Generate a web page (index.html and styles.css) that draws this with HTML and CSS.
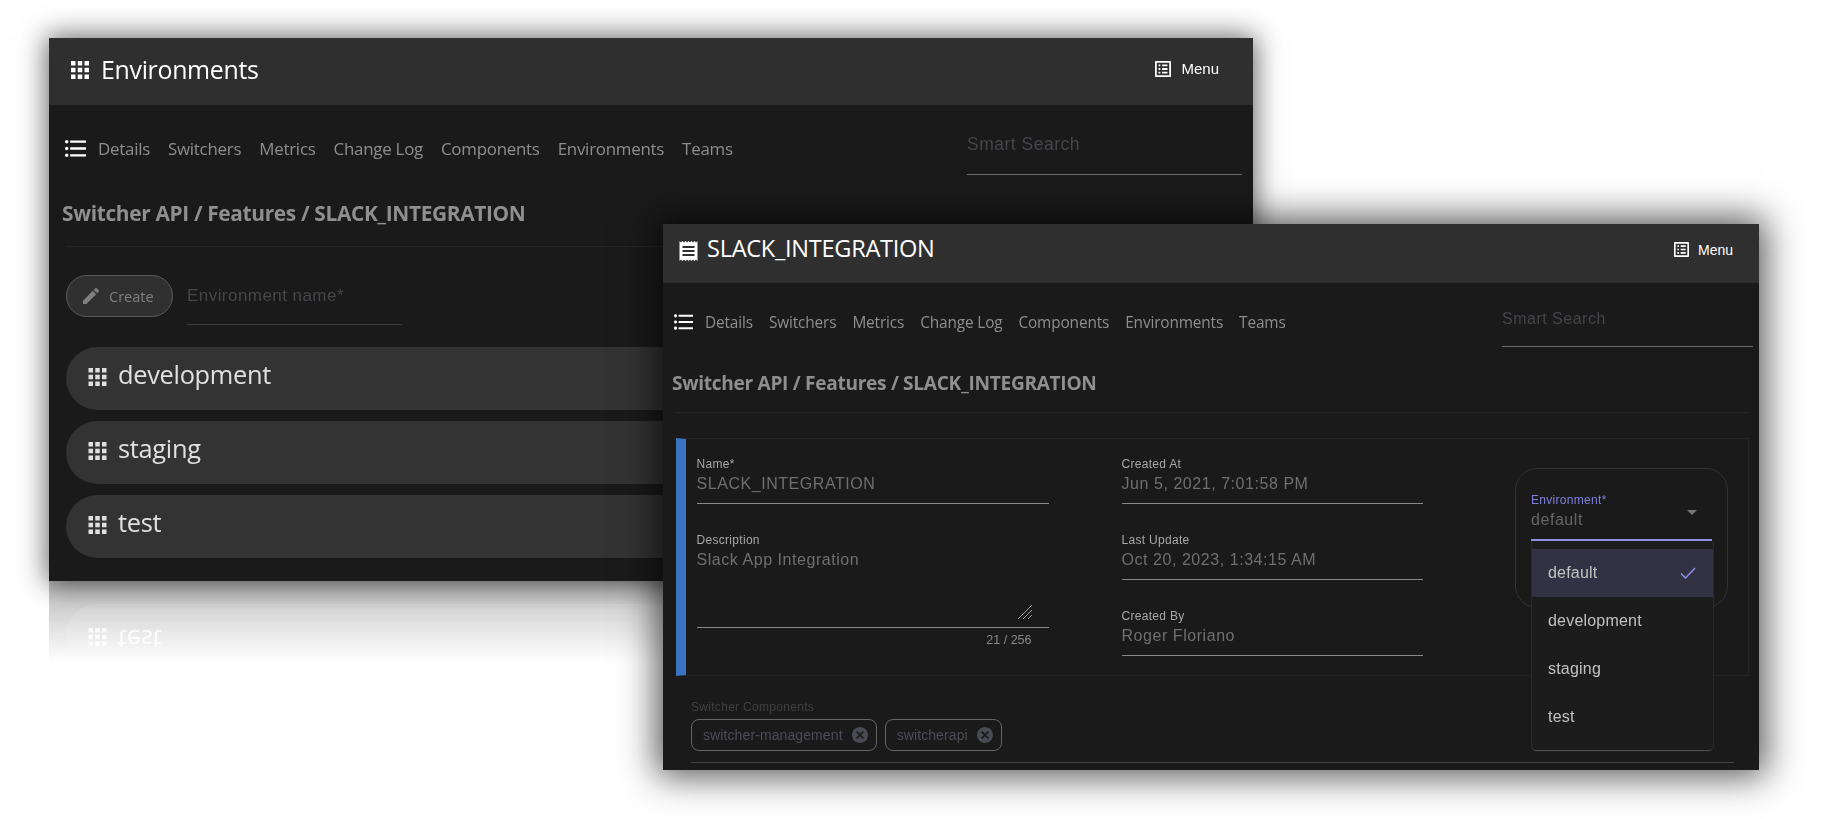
FILE: index.html
```html
<!DOCTYPE html>
<html lang="en">
<head>
  <meta charset="UTF-8">
  <title>Switcher API</title>
  <link rel="stylesheet" href="styles.css">
</head>
<body>
  <svg class="defs" width="0" height="0">
    <symbol id="i-apps" viewBox="4 4 16 16"><path d="M4 8h4V4H4v4zm6 12h4v-4h-4v4zm-6 0h4v-4H4v4zm0-6h4v-4H4v4zm6 0h4v-4h-4v4zm6-10v4h4V4h-4zm-6 4h4V4h-4v4zm6 6h4v-4h-4v4zm0 6h4v-4h-4v4z"/></symbol>
    <symbol id="i-list" viewBox="2.5 4.5 18.5 15"><path d="M4 10.5c-.83 0-1.5.67-1.5 1.5s.67 1.5 1.5 1.5 1.5-.67 1.5-1.5-.67-1.5-1.5-1.5zm0-6c-.83 0-1.5.67-1.5 1.5S3.17 7.5 4 7.5 5.5 6.83 5.5 6 4.83 4.5 4 4.5zm0 12c-.83 0-1.5.68-1.5 1.5s.68 1.5 1.5 1.5 1.5-.68 1.5-1.5-.67-1.5-1.5-1.5zM7 19h14v-2H7v2zm0-6h14v-2H7v2zm0-8v2h14V5H7z"/></symbol>
    <symbol id="i-menu" viewBox="3 3 18 18"><path d="M19 5v14H5V5h14m1.1-2H3.9c-.5 0-.9.4-.9.9v16.2c0 .4.4.9.9.9h16.2c.4 0 .9-.5.9-.9V3.9c0-.5-.5-.9-.9-.9zM11 7h6v2h-6V7zm0 4h6v2h-6v-2zm0 4h6v2h-6zM7 7h2v2H7zm0 4h2v2H7zm0 4h2v2H7z"/></symbol>
    <symbol id="i-receipt" viewBox="3 2 18 20"><path d="M18 17H6v-2h12v2zm0-4H6v-2h12v2zm0-4H6V7h12v2zM3 22l1.5-1.5L6 22l1.5-1.5L9 22l1.5-1.5L12 22l1.5-1.5L15 22l1.5-1.5L18 22l1.5-1.5L21 22V2l-1.5 1.5L18 2l-1.5 1.5L15 2l-1.5 1.5L12 2l-1.5 1.5L9 2 7.5 3.5 6 2 4.5 3.5 3 2v20z"/></symbol>
    <symbol id="i-edit" viewBox="3 3 18 18"><path d="M3 17.25V21h3.75L17.81 9.94l-3.75-3.75L3 17.25zM20.71 7.04c.39-.39.39-1.02 0-1.41l-2.34-2.34c-.39-.39-1.02-.39-1.41 0l-1.83 1.83 3.75 3.75 1.83-1.83z"/></symbol>
    <symbol id="i-cancel" viewBox="2 2 20 20"><path d="M12 2C6.47 2 2 6.47 2 12s4.47 10 10 10 10-4.47 10-10S17.53 2 12 2zm5 13.59L15.59 17 12 13.41 8.41 17 7 15.59 10.59 12 7 8.41 8.41 7 12 10.59 15.59 7 17 8.41 13.41 12 17 15.59z"/></symbol>
  </svg>

  <!-- back window: environments list -->
  <section class="window win-env">
    <header class="topbar">
      <div class="topbar-title">
        <svg class="ic-apps"><use href="#i-apps"/></svg>
        <span>Environments</span>
      </div>
      <div class="topbar-menu">
        <svg class="ic-menu"><use href="#i-menu"/></svg>
        <span>Menu</span>
      </div>
    </header>
    <div class="subnav">
      <svg class="ic-list"><use href="#i-list"/></svg>
      <a>Details</a><a>Switchers</a><a>Metrics</a><a>Change Log</a><a>Components</a><a>Environments</a><a>Teams</a>
      <div class="smart-search">Smart Search</div>
    </div>
    <h2 class="crumb">Switcher API / Features / SLACK_INTEGRATION</h2>
    <div class="crumb-line"></div>
    <div class="create-row">
      <button class="btn-create"><svg class="ic-edit"><use href="#i-edit"/></svg>Create</button>
      <div class="env-name">Environment name*</div>
    </div>
    <div class="env-list">
      <div class="env-pill"><svg class="ic-pill"><use href="#i-apps"/></svg><span>development</span></div>
      <div class="env-pill"><svg class="ic-pill"><use href="#i-apps"/></svg><span>staging</span></div>
      <div class="env-pill"><svg class="ic-pill"><use href="#i-apps"/></svg><span>test</span></div>
    </div>
  </section>

  <!-- front window: switcher detail -->
  <section class="window win-detail">
    <header class="topbar">
      <div class="topbar-title">
        <svg class="ic-receipt"><use href="#i-receipt"/></svg>
        <span>SLACK_INTEGRATION</span>
      </div>
      <div class="topbar-menu">
        <svg class="ic-menu"><use href="#i-menu"/></svg>
        <span>Menu</span>
      </div>
    </header>
    <div class="subnav">
      <svg class="ic-list"><use href="#i-list"/></svg>
      <a>Details</a><a>Switchers</a><a>Metrics</a><a>Change Log</a><a>Components</a><a>Environments</a><a>Teams</a>
      <div class="smart-search">Smart Search</div>
    </div>
    <h2 class="crumb">Switcher API / Features / SLACK_INTEGRATION</h2>
    <div class="crumb-line"></div>

    <div class="card">
      <div class="col-main">
        <div class="field">
          <label>Name*</label>
          <div class="value">SLACK_INTEGRATION</div>
        </div>
        <div class="field field-area">
          <label>Description</label>
          <div class="value">Slack App Integration</div>
          <svg class="resize" viewBox="0 0 14 14"><path d="M0 14 14 0M5 14 14 5M10 14l4-4"/></svg>
        </div>
        <div class="hint">21 / 256</div>
      </div>
      <div class="col-meta">
        <div class="field">
          <label>Created At</label>
          <div class="value">Jun 5, 2021, 7:01:58 PM</div>
        </div>
        <div class="field">
          <label>Last Update</label>
          <div class="value">Oct 20, 2023, 1:34:15 AM</div>
        </div>
        <div class="field">
          <label>Created By</label>
          <div class="value">Roger Floriano</div>
        </div>
      </div>
      <div class="env-box">
        <div class="env-select">
          <label>Environment*</label>
          <div class="value">default</div>
          <span class="arrow"></span>
        </div>
      </div>
    </div>

    <div class="components">
      <label>Switcher Components</label>
      <div class="chips">
        <span class="chip">switcher-management<svg class="ic-cancel"><use href="#i-cancel"/></svg></span>
        <span class="chip">switcherapi<svg class="ic-cancel"><use href="#i-cancel"/></svg></span>
      </div>
    </div>

    <div class="dropdown">
      <div class="option selected">default
        <svg class="ic-check" viewBox="0 0 16 12"><path d="M1 6.5 5.5 11 15 1"/></svg>
      </div>
      <div class="option">development</div>
      <div class="option">staging</div>
      <div class="option">test</div>
    </div>
  </section>
</body>
</html>
```

FILE: styles.css
```css
html, body {
  margin: 0;
  height: 100%;
  background: #fff;
  overflow: hidden;
}
body {
  position: relative;
  font-family: "Liberation Sans", sans-serif;
}
.defs {
  position: absolute;
}
svg {
  fill: currentColor;
  flex: none;
}

.window {
  position: absolute;
  box-sizing: border-box;
  background: #1a1a1a;
  box-shadow: 0 0 26px 2px rgba(0, 0, 0, 0.62);
  overflow: hidden;
}
.win-env {
  left: 49px;
  top: 38px;
  width: 1204px;
  height: 543px;
  -webkit-box-reflect: below 0 linear-gradient(transparent 85%, rgba(255, 255, 255, 0.3));
}
.win-detail {
  left: 663px;
  top: 224px;
  width: 1096px;
  height: 546px;
  box-shadow: 0 0 34px 6px rgba(0, 0, 0, 0.68);
}

/* top bar */
.topbar {
  display: flex;
  align-items: center;
  justify-content: space-between;
  box-sizing: border-box;
  background: #2f2f2f;
  color: #fff;
}
.win-env .topbar {
  height: 67px;
  padding: 0 34px 6px 22px;
}
.win-detail .topbar {
  height: 59px;
  padding: 0 26px 8px 16px;
}
.topbar-title {
  display: flex;
  align-items: center;
  font-family: "Open Sans", sans-serif;
}
.win-env .topbar-title {
  gap: 12px;
  font-size: 24.9px;
  letter-spacing: -0.3px;
}
.win-detail .topbar-title {
  gap: 9px;
  font-size: 23.6px;
  letter-spacing: -0.3px;
}
.win-detail .topbar-title span {
  margin-top: -3px;
}
.ic-apps {
  width: 18px;
  height: 18px;
  margin-top: 3px;
}
.ic-receipt {
  width: 19px;
  height: 20px;
  margin-top: 3px;
}
.topbar-menu {
  display: flex;
  align-items: center;
  font-weight: 500;
}
.win-env .topbar-menu {
  gap: 10px;
  font-size: 15px;
}
.win-detail .topbar-menu {
  gap: 9px;
  font-size: 14px;
}
.win-env .ic-menu {
  width: 16px;
  height: 16px;
}
.win-detail .ic-menu {
  width: 15px;
  height: 15px;
}

/* sub navigation */
.subnav {
  display: flex;
  align-items: center;
  box-sizing: border-box;
  font-family: "Open Sans", sans-serif;
  color: #8e8e8e;
}
.win-env .subnav {
  height: 88px;
  padding: 0 11px 2px 16px;
  font-size: 16.9px;
  letter-spacing: -0.25px;
  gap: 18px;
}
.win-detail .subnav {
  height: 80px;
  padding: 0 6px 2px 11px;
  font-size: 15.4px;
  letter-spacing: -0.15px;
  gap: 16px;
}
.ic-list {
  color: #fff;
}
.win-env .ic-list {
  width: 21px;
  height: 17px;
  margin-right: -6px;
}
.win-detail .ic-list {
  width: 19px;
  height: 16px;
  margin-right: -4px;
}
.smart-search {
  align-self: flex-start;
  margin-left: auto;
  box-sizing: border-box;
  font-family: "Liberation Sans", sans-serif;
  line-height: 20px;
  color: #45454a;
  border-bottom: 1px solid #6b6b6b;
}
.win-env .smart-search {
  width: 275px;
  margin-top: 29px;
  padding-bottom: 20px;
  font-size: 17.5px;
  letter-spacing: 0.5px;
}
.win-detail .smart-search {
  width: 251px;
  margin-top: 26px;
  padding-bottom: 17px;
  font-size: 16px;
  letter-spacing: 0.5px;
}

/* breadcrumb */
.crumb {
  margin: 0;
  font-family: "Open Sans", sans-serif;
  font-weight: 700;
  color: #8f8f8f;
}
.win-env .crumb {
  padding: 9px 0 0 13px;
  font-size: 20.9px;
  line-height: 22px;
  letter-spacing: -0.35px;
}
.win-detail .crumb {
  padding: 9px 0 0 9px;
  font-size: 19.1px;
  line-height: 22px;
  letter-spacing: -0.3px;
}
.crumb-line {
  height: 1px;
  background: #262626;
}
.win-env .crumb-line {
  margin: 22px 0 0 17px;
}
.win-detail .crumb-line {
  margin: 18px 10px 0 13px;
}

/* create row */
.create-row {
  display: flex;
  align-items: flex-start;
  gap: 14px;
  margin: 28px 0 0 17px;
}
.btn-create {
  display: flex;
  align-items: center;
  gap: 10px;
  width: 107px;
  height: 42px;
  padding: 0 0 0 16px;
  box-sizing: border-box;
  background: #303030;
  border: 1px solid #5a5a5a;
  border-radius: 21px;
  color: #808080;
  font-family: "Open Sans", sans-serif;
  font-size: 14.5px;
}
.ic-edit {
  width: 16px;
  height: 16px;
}
.env-name {
  width: 215px;
  height: 50px;
  box-sizing: border-box;
  padding-top: 11px;
  font-size: 17px;
  letter-spacing: 0.45px;
  color: #46464b;
  border-bottom: 1px solid #3c3c3c;
}

/* environment list */
.env-list {
  display: flex;
  flex-direction: column;
  gap: 11px;
  margin: 22px 22px 0 17px;
}
.env-pill {
  display: flex;
  align-items: center;
  gap: 11px;
  height: 63px;
  padding: 0 0 9px 22px;
  box-sizing: border-box;
  background: #333;
  border-radius: 32px;
  color: #e0e0e0;
  font-family: "Open Sans", sans-serif;
  font-size: 25.4px;
  letter-spacing: -0.3px;
}
.ic-pill {
  width: 19px;
  height: 18px;
  margin-top: 6px;
}

/* detail card */
.card {
  display: flex;
  position: relative;
  height: 238px;
  margin: 25px 10px 0 13px;
  padding: 18px 0 0 10.5px;
  box-sizing: border-box;
  border: 1px solid #242424;
  border-left: 10px solid #3a72c4;
}
.col-main {
  width: 352px;
}
.col-meta {
  width: 301px;
  margin-left: 73px;
}
.field {
  position: relative;
  box-sizing: border-box;
  height: 47px;
  margin-bottom: 29px;
  border-bottom: 1px solid #8a8a8a;
}
.field label, .env-select label {
  display: block;
  font-size: 12px;
  line-height: 14px;
  letter-spacing: 0.3px;
  color: #a8a8a8;
}
.value {
  font-size: 16px;
  line-height: 20px;
  margin-top: 3px;
  letter-spacing: 0.55px;
  color: #6f6f6f;
}
.col-meta .field:last-child {
  margin-bottom: 0;
}
.field-area {
  height: 95px;
  margin-bottom: 0;
}
.resize {
  position: absolute;
  right: 17px;
  bottom: 8px;
  width: 14px;
  height: 14px;
  fill: none;
  stroke: #9a9a9a;
  stroke-width: 1;
}
.hint {
  margin: 5px 17px 0 0;
  text-align: right;
  font-size: 12.5px;
  line-height: 14px;
  color: #8a8a8a;
}
.env-box {
  position: absolute;
  left: 829px;
  top: 29px;
  width: 213px;
  height: 140px;
  box-sizing: border-box;
  border: 1px solid #333;
  border-radius: 22px;
  padding: 24px 15px 0 15px;
}
.env-select {
  position: relative;
  height: 48px;
  box-sizing: border-box;
  border-bottom: 2px solid #8c8fe8;
}
.env-select label {
  color: #7d81db;
}
.env-select .value {
  margin-top: 3px;
  color: #666;
}
.arrow {
  position: absolute;
  right: 15px;
  top: 17px;
  width: 0;
  height: 0;
  border-left: 5px solid transparent;
  border-right: 5px solid transparent;
  border-top: 5px solid #777;
}

/* switcher components */
.components {
  margin: 24px 25px 0 28px;
  padding-bottom: 11px;
  border-bottom: 1px solid #444;
}
.components label {
  display: block;
  font-size: 12px;
  line-height: 14px;
  letter-spacing: 0.3px;
  color: #404040;
}
.chips {
  display: flex;
  gap: 8px;
  margin-top: 5px;
}
.chip {
  display: flex;
  align-items: center;
  gap: 9px;
  height: 32px;
  padding: 0 8px 0 11px;
  box-sizing: border-box;
  border: 1px solid #666;
  border-radius: 8px;
  font-size: 14px;
  letter-spacing: 0.1px;
  color: #4c4c56;
}
.ic-cancel {
  width: 16px;
  height: 16px;
  color: #4a4a55;
}

/* open select panel */
.dropdown {
  position: absolute;
  left: 869px;
  top: 317px;
  width: 181px;
  height: 209px;
  box-sizing: border-box;
  padding-top: 8px;
  background: #1c1c1c;
  border-radius: 0 0 4px 4px;
  box-shadow: 0 2px 1px -1px #555, 1px 0 0 #2a2a2a, -1px 0 0 #2a2a2a;
}
.option {
  display: flex;
  align-items: center;
  justify-content: space-between;
  height: 48px;
  padding: 0 17px 0 16px;
  font-size: 16px;
  letter-spacing: 0.2px;
  color: #c2c2c2;
}
.option.selected {
  background: #333245;
}
.ic-check {
  width: 16px;
  height: 12px;
  fill: none;
  stroke: #8c8fe8;
  stroke-width: 1.5;
}
```
